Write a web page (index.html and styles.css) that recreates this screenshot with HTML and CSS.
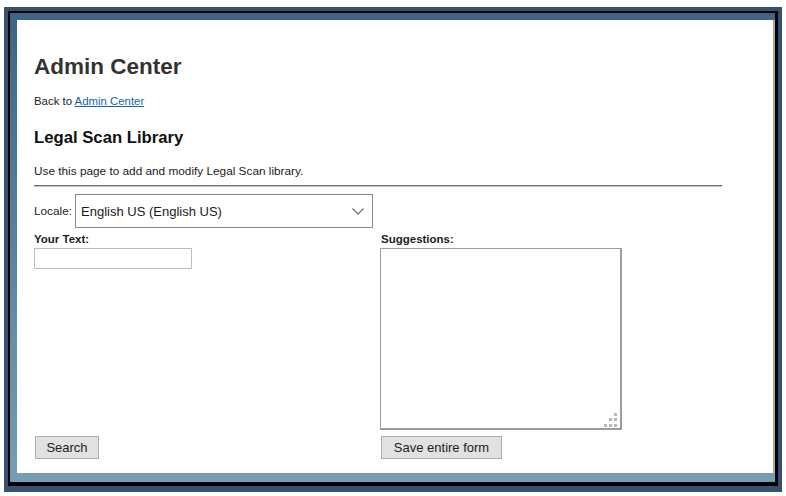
FILE: index.html
```html
<!DOCTYPE html>
<html>
<head>
<meta charset="utf-8">
<title>Legal Scan Library</title>
<link rel="stylesheet" href="styles.css">
</head>
<body>
<div class="frame">
  <div class="inner">
    <div class="content">
      <h1 class="title">Admin Center</h1>
      <p class="back">Back to <a href="#" class="link">Admin Center</a></p>
      <h2 class="subtitle">Legal Scan Library</h2>
      <p class="desc">Use this page to add and modify Legal Scan library.</p>
      <div class="rule"></div>
      <div class="locale">
        <span class="locale-label">Locale:</span>
        <div class="select">
          <span class="select-text">English US (English US)</span>
          <svg class="chev" width="12" height="7" viewBox="0 0 12 7"><path d="M0.5 0.5 L6 6 L11.5 0.5" fill="none" stroke="#6b6b6b" stroke-width="1.1"/></svg>
        </div>
      </div>
      <div class="form">
        <div class="lbl">Your Text:</div>
        <div class="lbl lbl-right">Suggestions:</div>
        <div class="cell"><div class="textbox"></div></div>
        <div class="area">
          <svg class="grip" width="13" height="14" viewBox="0 0 13 14">
            <rect x="10" y="0" width="3" height="3" fill="#b8b8b8"/>
            <rect x="5" y="5" width="3" height="3" fill="#b8b8b8"/>
            <rect x="10" y="5" width="3" height="3" fill="#b8b8b8"/>
            <rect x="0" y="11" width="3" height="3" fill="#b8b8b8"/>
            <rect x="5" y="11" width="3" height="3" fill="#b8b8b8"/>
            <rect x="10" y="11" width="3" height="3" fill="#b8b8b8"/>
          </svg>
        </div>
        <div class="cell"><button class="btn btn-search">Search</button></div>
        <div class="cell"><button class="btn btn-save">Save entire form</button></div>
      </div>
    </div>
  </div>
</div>
</body>
</html>
```

FILE: styles.css
```css
html, body {
  margin: 0;
  padding: 0;
  background: #ffffff;
}
body {
  font-family: "Liberation Sans", Arial, sans-serif;
  color: #222;
}
.frame {
  margin: 7px 4px 4px 4px;
  width: 778px;
  height: 485px;
  box-sizing: border-box;
  background: #34516f;
  padding: 4px 4px 6px 4px;
}
.inner {
  border: 2px solid #000;
  border-right-width: 3px;
  border-bottom-width: 4px;
  background: linear-gradient(#3f6386 0%, #5a7f9c 45%, #769db4 100%);
  padding: 7px 0 9px 7px;
  height: 100%;
  box-sizing: border-box;
}
.content {
  background: #fff;
  height: 100%;
  box-sizing: border-box;
  border-right: 2px solid #a8a8a8;
  padding-left: 17px;
  padding-top: 34px;
}
.title {
  margin: 0;
  font-size: 22.5px;
  line-height: 26px;
  font-weight: bold;
  color: #333;
}
.back {
  margin: 14px 0 0 0;
  font-size: 11.4px;
  line-height: 14px;
  color: #222;
}
.link {
  color: #1264a3;
  text-decoration: underline;
}
.subtitle {
  margin: 20px 0 0 0;
  font-size: 16.7px;
  line-height: 20px;
  font-weight: bold;
  color: #111;
}
.desc {
  margin: 16px 0 0 0;
  font-size: 11.8px;
  line-height: 14px;
  color: #222;
}
.rule {
  margin-top: 7px;
  width: 688px;
  height: 0;
  border-top: 1px solid #6e6e6e;
  border-bottom: 1px solid #c4c4c4;
}
.locale {
  margin-top: 7px;
  display: flex;
  align-items: center;
  gap: 3px;
}
.locale-label {
  font-size: 11.8px;
  color: #222;
}
.select {
  width: 298px;
  height: 34px;
  box-sizing: border-box;
  border: 1px solid #8a8a8a;
  display: flex;
  align-items: center;
  justify-content: space-between;
  padding: 0 8px 0 5px;
}
.select-text {
  font-size: 13px;
  color: #1a1a1a;
}
.chev {
  display: block;
  margin-top: 1px;
}
.form {
  margin-top: 4px;
  display: grid;
  grid-template-columns: 346px 242px;
  grid-template-rows: 14px 182px 23px;
  row-gap: 2px;
}
.lbl {
  font-size: 11.5px;
  line-height: 14px;
  font-weight: bold;
  color: #222;
}
.lbl-right {
  padding-left: 1px;
}
.cell {
  display: flex;
  align-items: flex-start;
}
.textbox {
  width: 158px;
  height: 21px;
  box-sizing: border-box;
  border: 1px solid #bdbdbd;
  background: #fff;
}
.area {
  box-sizing: border-box;
  border: 1px solid #9c9c9c;
  border-right-width: 2px;
  border-bottom-width: 2px;
  display: flex;
  align-items: flex-end;
  justify-content: flex-end;
  padding: 0 3px 1px 0;
}
.grip {
  display: block;
}
.form .cell:nth-last-child(-n+2) {
  margin-top: 4px;
}
.btn {
  font-family: "Liberation Sans", Arial, sans-serif;
  font-size: 13px;
  color: #222;
  background: #e1e1e1;
  border: 1px solid #adadad;
  height: 23px;
  padding: 0;
  margin: 0 0 0 1px;
}
.btn-search {
  width: 64px;
}
.btn-save {
  width: 121px;
}
```
